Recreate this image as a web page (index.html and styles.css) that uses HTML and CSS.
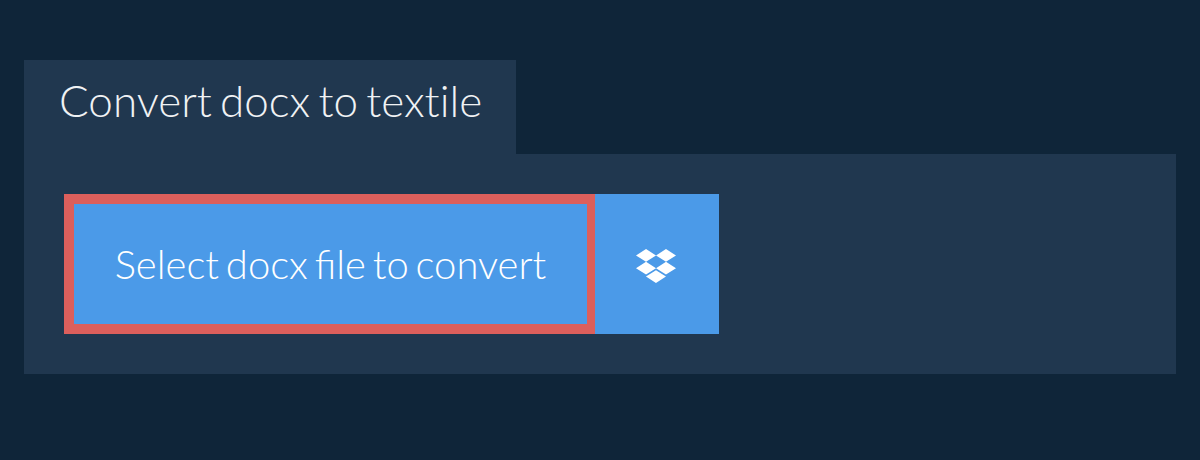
FILE: index.html
```html
<!DOCTYPE html>
<html lang="en">
<head>
    <meta charset="UTF-8">
    <title>Convert docx to textile</title>
    <link rel="stylesheet" href="styles.css">
</head>
<body>
    <div class="tab">
        <h1>Convert docx to textile</h1>
    </div>
    <div class="panel">
        <div class="btn-group">
            <button type="button" class="select-btn">Select docx file to convert</button>
            <button type="button" class="dropbox-btn" aria-label="Dropbox">
                <svg class="dropbox-icon" viewBox="0 32 528 448" width="40" height="34">
                    <path fill="#fff" d="M264.4 116.3l-132 84.3 132 84.3-132 84.3L0 284.1l132.3-84.3L0 116.3 132.3 32l132.1 84.3zM131.6 395.7l132-84.3 132 84.3-132 84.3-132-84.3zm132.8-111.6l132-84.3-132-83.6L395.7 32 528 116.3l-132.3 84.3L528 284.8l-132.3 84.3-131.3-85z"/>
                </svg>
            </button>
        </div>
    </div>
</body>
</html>
```

FILE: styles.css
```css
* {
    margin: 0;
    padding: 0;
    box-sizing: border-box;
}

body {
    font-family: Lato, 'Open Sans', sans-serif;
    font-weight: 300;
    background: #0f2539;
    padding: 60px 24px 0;
}

.tab {
    background: #20374f;
    width: 492px;
    height: 94px;
    padding: 10px 0 0 35px;
}

.tab h1 {
    color: #f0f2f4;
    font-size: 44px;
    font-weight: 300;
    line-height: 60px;
    word-spacing: -3.7px;
    font-feature-settings: "liga" 0;
}

.panel {
    background: #20374f;
    padding: 40px;
    height: 220px;
}

.btn-group {
    display: flex;
    height: 140px;
}

.select-btn {
    width: 531px;
    background: #4b9ae8;
    border: 10px solid #dc5f5c;
    border-right-width: 8px;
    color: white;
    font-family: inherit;
    font-weight: 300;
    font-size: 40px;
    word-spacing: -0.1em;
}

.dropbox-btn {
    width: 124px;
    background: #4b9ae8;
    border: none;
    display: flex;
    align-items: center;
    justify-content: center;
    padding: 4px 3px 0 0;
}
```
